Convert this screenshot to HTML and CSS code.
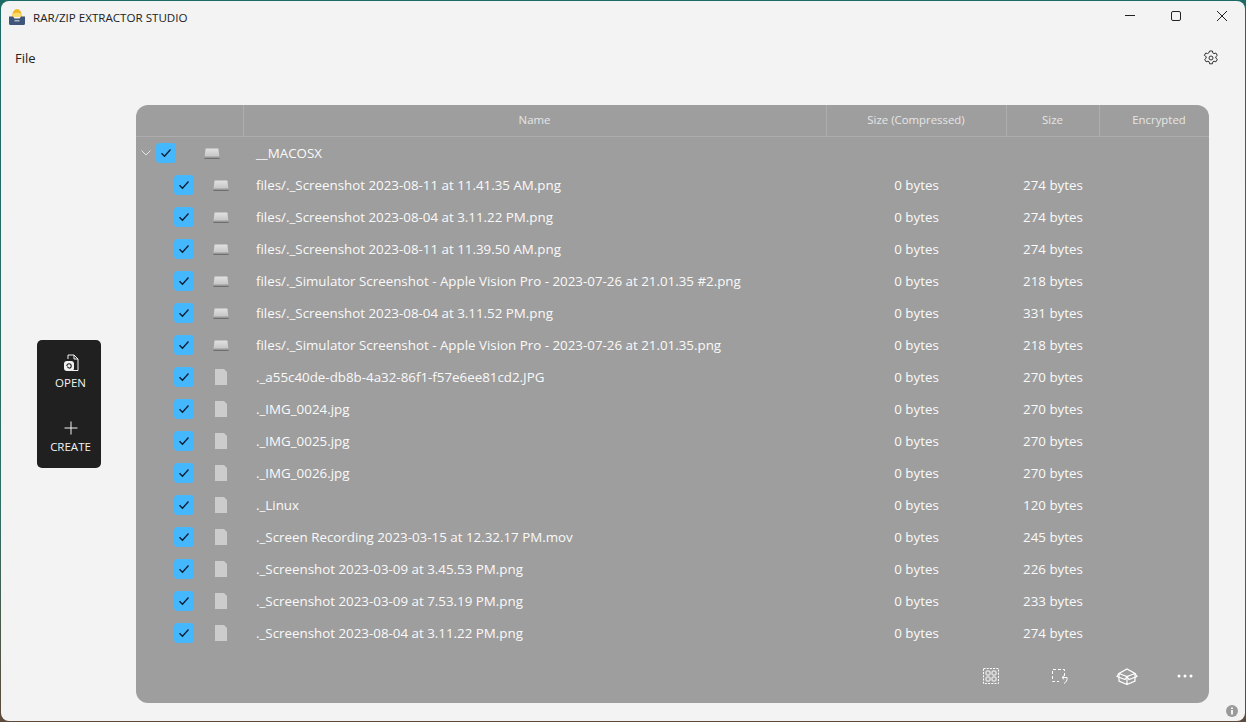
FILE: index.html
```html
<!DOCTYPE html>
<html lang="en">
<head>
<meta charset="utf-8">
<title>RAR/ZIP Extractor Studio</title>
<link rel="stylesheet" href="styles.css">
</head>
<body>
<svg class="defs" width="0" height="0" aria-hidden="true">
  <defs>
    <linearGradient id="driveFill" x1="0" y1="0" x2="0" y2="1">
      <stop offset="0" stop-color="#e2e2e2"/><stop offset="0.75" stop-color="#c8c8c8"/><stop offset="1" stop-color="#8a8a8a"/>
    </linearGradient>
    <symbol id="drive" viewBox="0 0 16 11"><path d="M1.600 0.500h12.800l1.200 9.500H0.400z" fill="url(#driveFill)"/><rect x="0.400" y="10" width="15.200" height="1" fill="#6f6f6f"/></symbol>
    <symbol id="file" viewBox="0 0 12 16"><path d="M0 0h9l3 3v13H0z" fill="#cccccc"/></symbol>
    <symbol id="check" viewBox="0 0 12 10"><path d="M1.500 5.200l3 3L10.500 1.500" fill="none" stroke="#0c1c30" stroke-width="1.300"/></symbol>
  </defs>
</svg>
<div class="window">
  <header class="titlebar">
    <div class="title">
      <svg class="logo" viewBox="0 0 16 16" width="16" height="16"><path d="M3 8C3 3 5.500 0 8 0s5 3 5 8z" fill="#f2b824"/><path d="M2 8l2-3.500c2.500-1 5.500-1 8 0L14 8z" fill="#fbdc6a"/><path d="M0 7.500h4l1.500 2h5l1.500-2h4v7a1.500 1.500 0 0 1-1.500 1.500h-13A1.500 1.500 0 0 1 0 14.500z" fill="#40557a"/><rect x="5.500" y="11" width="5" height="1.500" fill="#aab6c8"/></svg>
      <span>RAR/ZIP EXTRACTOR STUDIO</span>
    </div>
    <div class="controls">
      <svg class="ctl" viewBox="0 0 46 32" width="46" height="32"><path d="M18 14.500h10" stroke="#222" fill="none"/></svg>
      <svg class="ctl" viewBox="0 0 46 32" width="46" height="32"><rect x="18.500" y="10.500" width="9" height="9" rx="1.500" stroke="#222" fill="none"/></svg>
      <svg class="ctl" viewBox="0 0 46 32" width="46" height="32"><path d="M18 10l10 10M28 10l-10 10" stroke="#222" fill="none"/></svg>
    </div>
  </header>
  <div class="menubar">
    <span class="menu-file">File</span>
    <svg class="gear" viewBox="0 0 16 16" width="16" height="16"><path d="M6.600 1h2.800l.4 1.900 1.200.7 1.900-.6 1.400 2.400-1.500 1.300v1.400l1.500 1.300-1.400 2.400-1.900-.6-1.200.7-.4 1.900H6.600l-.4-1.900-1.200-.7-1.900.6-1.400-2.400 1.500-1.300V6.700L1.300 5.400l1.400-2.400 1.900.6 1.200-.7z" fill="none" stroke="#333" stroke-width="1"/><circle cx="8" cy="8" r="2" fill="none" stroke="#333"/></svg>
  </div>
  <div class="content">
    <aside class="side">
      <div class="actions">
        <div class="action">
          <svg viewBox="0 0 16 18" width="16" height="18"><path d="M5 5V1h6l4 4v11.500H9" fill="none" stroke="#f2f2f2"/><path d="M11 1v4h4" fill="none" stroke="#f2f2f2"/><rect x="1" y="7" width="10" height="10" rx="3" fill="#f2f2f2"/><path d="M3.800 12a2.200 2.200 0 1 1 2.200 2.200M6 14.200l-1.800-1.500" fill="none" stroke="#202020" stroke-width="1.100"/></svg>
          <span>OPEN</span>
        </div>
        <div class="action">
          <svg viewBox="0 0 16 16" width="16" height="16"><path d="M8 1.500v13M1.500 8h13" stroke="#f2f2f2" fill="none"/></svg>
          <span>CREATE</span>
        </div>
      </div>
    </aside>
    <main class="panel">
      <div class="row head">
        <div class="c first"></div><div class="c">Name</div><div class="c">Size (Compressed)</div><div class="c">Size</div><div class="c enc">Encrypted</div>
      </div>
      <div class="rows">
        <div class="row root"><div class="c first"><svg class="chev" viewBox="0 0 10 6" width="10" height="6"><path d="M.5.500L5 5l4.500-4.500" fill="none" stroke="#e4e4e4"/></svg><span class="cb"><svg width="12" height="10"><use href="#check"/></svg></span><svg class="ic-drive" width="16" height="11"><use href="#drive"/></svg></div><div class="c name">__MACOSX</div><div class="c"></div><div class="c"></div><div class="c"></div></div>
        <div class="row"><div class="c first"><span class="cb"><svg width="12" height="10"><use href="#check"/></svg></span><svg class="ic-drive" width="16" height="11"><use href="#drive"/></svg></div><div class="c name">files/._Screenshot 2023-08-11 at 11.41.35 AM.png</div><div class="c">0 bytes</div><div class="c">274 bytes</div><div class="c"></div></div>
        <div class="row"><div class="c first"><span class="cb"><svg width="12" height="10"><use href="#check"/></svg></span><svg class="ic-drive" width="16" height="11"><use href="#drive"/></svg></div><div class="c name">files/._Screenshot 2023-08-04 at 3.11.22 PM.png</div><div class="c">0 bytes</div><div class="c">274 bytes</div><div class="c"></div></div>
        <div class="row"><div class="c first"><span class="cb"><svg width="12" height="10"><use href="#check"/></svg></span><svg class="ic-drive" width="16" height="11"><use href="#drive"/></svg></div><div class="c name">files/._Screenshot 2023-08-11 at 11.39.50 AM.png</div><div class="c">0 bytes</div><div class="c">274 bytes</div><div class="c"></div></div>
        <div class="row"><div class="c first"><span class="cb"><svg width="12" height="10"><use href="#check"/></svg></span><svg class="ic-drive" width="16" height="11"><use href="#drive"/></svg></div><div class="c name">files/._Simulator Screenshot - Apple Vision Pro - 2023-07-26 at 21.01.35 #2.png</div><div class="c">0 bytes</div><div class="c">218 bytes</div><div class="c"></div></div>
        <div class="row"><div class="c first"><span class="cb"><svg width="12" height="10"><use href="#check"/></svg></span><svg class="ic-drive" width="16" height="11"><use href="#drive"/></svg></div><div class="c name">files/._Screenshot 2023-08-04 at 3.11.52 PM.png</div><div class="c">0 bytes</div><div class="c">331 bytes</div><div class="c"></div></div>
        <div class="row"><div class="c first"><span class="cb"><svg width="12" height="10"><use href="#check"/></svg></span><svg class="ic-drive" width="16" height="11"><use href="#drive"/></svg></div><div class="c name">files/._Simulator Screenshot - Apple Vision Pro - 2023-07-26 at 21.01.35.png</div><div class="c">0 bytes</div><div class="c">218 bytes</div><div class="c"></div></div>
        <div class="row"><div class="c first"><span class="cb"><svg width="12" height="10"><use href="#check"/></svg></span><svg class="ic-file" width="12" height="16"><use href="#file"/></svg></div><div class="c name">._a55c40de-db8b-4a32-86f1-f57e6ee81cd2.JPG</div><div class="c">0 bytes</div><div class="c">270 bytes</div><div class="c"></div></div>
        <div class="row"><div class="c first"><span class="cb"><svg width="12" height="10"><use href="#check"/></svg></span><svg class="ic-file" width="12" height="16"><use href="#file"/></svg></div><div class="c name">._IMG_0024.jpg</div><div class="c">0 bytes</div><div class="c">270 bytes</div><div class="c"></div></div>
        <div class="row"><div class="c first"><span class="cb"><svg width="12" height="10"><use href="#check"/></svg></span><svg class="ic-file" width="12" height="16"><use href="#file"/></svg></div><div class="c name">._IMG_0025.jpg</div><div class="c">0 bytes</div><div class="c">270 bytes</div><div class="c"></div></div>
        <div class="row"><div class="c first"><span class="cb"><svg width="12" height="10"><use href="#check"/></svg></span><svg class="ic-file" width="12" height="16"><use href="#file"/></svg></div><div class="c name">._IMG_0026.jpg</div><div class="c">0 bytes</div><div class="c">270 bytes</div><div class="c"></div></div>
        <div class="row"><div class="c first"><span class="cb"><svg width="12" height="10"><use href="#check"/></svg></span><svg class="ic-file" width="12" height="16"><use href="#file"/></svg></div><div class="c name">._Linux</div><div class="c">0 bytes</div><div class="c">120 bytes</div><div class="c"></div></div>
        <div class="row"><div class="c first"><span class="cb"><svg width="12" height="10"><use href="#check"/></svg></span><svg class="ic-file" width="12" height="16"><use href="#file"/></svg></div><div class="c name">._Screen Recording 2023-03-15 at 12.32.17 PM.mov</div><div class="c">0 bytes</div><div class="c">245 bytes</div><div class="c"></div></div>
        <div class="row"><div class="c first"><span class="cb"><svg width="12" height="10"><use href="#check"/></svg></span><svg class="ic-file" width="12" height="16"><use href="#file"/></svg></div><div class="c name">._Screenshot 2023-03-09 at 3.45.53 PM.png</div><div class="c">0 bytes</div><div class="c">226 bytes</div><div class="c"></div></div>
        <div class="row"><div class="c first"><span class="cb"><svg width="12" height="10"><use href="#check"/></svg></span><svg class="ic-file" width="12" height="16"><use href="#file"/></svg></div><div class="c name">._Screenshot 2023-03-09 at 7.53.19 PM.png</div><div class="c">0 bytes</div><div class="c">233 bytes</div><div class="c"></div></div>
        <div class="row"><div class="c first"><span class="cb"><svg width="12" height="10"><use href="#check"/></svg></span><svg class="ic-file" width="12" height="16"><use href="#file"/></svg></div><div class="c name">._Screenshot 2023-08-04 at 3.11.22 PM.png</div><div class="c">0 bytes</div><div class="c">274 bytes</div><div class="c"></div></div>
      </div>
      <div class="tools">
        <svg viewBox="0 0 16 16" width="16" height="16"><g fill="none" stroke="#fff"><rect x=".5" y=".5" width="15" height="15" stroke-dasharray="2 1.200"/><rect x="3" y="3" width="4" height="4" rx=".8"/><rect x="9" y="3" width="4" height="4" rx=".8"/><rect x="3" y="9" width="4" height="4" rx=".8"/><rect x="9" y="9" width="4" height="4" rx=".8"/></g></svg>
        <svg viewBox="0 0 16 16" width="16" height="16"><g fill="none" stroke="#fff"><path d="M12.500 8V1.500h-12v12H7" stroke-dasharray="3 2"/><path d="M10 9.500h5c.6 2.800-1 4.800-3 6M10 9.500l2.200-2M10 9.500l2.200 2"/></g></svg>
        <svg viewBox="0 0 22 17" width="22" height="17"><g fill="none" stroke="#fff" stroke-width="1.200"><path d="M3 5.500L11 8.500l8-3-8-4.500zM3 5.500v7.500l8 3.500 8-3.500V5.500M11 8.500v8"/><path d="M3 5.500L1 8.500l8 3 2-3 2 3 8-3-2-3"/></g></svg>
        <svg viewBox="0 0 16 4" width="16" height="4"><g fill="#fff"><circle cx="2" cy="2" r="1.500"/><circle cx="8" cy="2" r="1.500"/><circle cx="14" cy="2" r="1.500"/></g></svg>
      </div>
    </main>
  </div>
  <svg class="info" viewBox="0 0 12 12" width="12" height="12"><circle cx="6" cy="6" r="6" fill="#9a9a9a"/><rect x="5" y="5" width="2" height="4.500" fill="#f3f3f3"/><rect x="5" y="2.500" width="2" height="1.500" fill="#f3f3f3"/></svg>
</div>
</body>
</html>
```

FILE: styles.css
```css
html, body {
  margin: 0;
  height: 100%;
}
body {
  box-sizing: border-box;
  padding: 1px;
  background: linear-gradient(#1c6a66 0, #2f6e64 70%, #5d4a3a 100%);
  overflow: hidden;
  font-family: "Open Sans", "Noto Sans", sans-serif;
}
.defs {
  position: absolute;
}
.window {
  position: relative;
  box-sizing: border-box;
  width: 1244px;
  height: 720px;
  background: #f3f3f3;
  border-radius: 8px;
  display: flex;
  flex-direction: column;
}
.titlebar {
  height: 32px;
  display: flex;
  justify-content: space-between;
  align-items: flex-start;
}
.title {
  display: flex;
  align-items: center;
  gap: 8px;
  height: 32px;
  padding-left: 8px;
  font-size: 11.6px;
  color: #222;
}
.controls {
  display: flex;
  flex-direction: row;
}
.ctl {
  display: block;
}
.menubar {
  height: 40px;
  display: flex;
  justify-content: space-between;
  align-items: center;
  padding: 10px 26px 0 14px;
  box-sizing: border-box;
}
.menu-file {
  font-size: 13px;
  color: #222;
}
.content {
  display: flex;
  height: 598px;
  padding-top: 32px;
}
.side {
  width: 135px;
  flex: none;
  box-sizing: border-box;
  padding-left: 36px;
  padding-top: 235px;
}
.actions {
  width: 64px;
  height: 128px;
  background: #202020;
  border-radius: 5px;
  display: flex;
  flex-direction: column;
}
.action {
  height: 64px;
  box-sizing: border-box;
  padding-left: 3px;
  display: flex;
  flex-direction: column;
  align-items: center;
  justify-content: center;
  gap: 3px;
  color: #f2f2f2;
  font-size: 11.5px;
  line-height: 15px;
}
.action + .action {
  padding-top: 2px;
}
.panel {
  width: 1073px;
  height: 598px;
  background: #9e9e9e;
  border-radius: 12px;
  display: flex;
  flex-direction: column;
  color: #fafafa;
  overflow: hidden;
}
.row {
  display: grid;
  grid-template-columns: 108px 583px 180px 93px 109px;
  height: 32px;
  align-items: center;
  font-size: 13.35px;
}
.c {
  text-align: center;
  white-space: nowrap;
  padding-right: 1px;
  box-sizing: border-box;
}
.first {
  display: flex;
  align-items: center;
  height: 32px;
  padding-left: 38px;
  box-sizing: border-box;
}
.head {
  font-size: 11.4px;
  color: #e6e6e6;
  border-bottom: 1px solid #adadad;
  box-sizing: border-box;
}
.head .c {
  height: 31px;
  line-height: 30px;
  border-right: 1px solid #adadad;
  box-sizing: border-box;
}
.head .first {
  padding: 0;
}
.head .enc {
  border-right: 0;
  padding-left: 10px;
}
.name {
  text-align: left;
  padding-left: 12px;
}
.root .first {
  padding-left: 5px;
}
.chev {
  margin-right: 5px;
}
.cb {
  width: 20px;
  height: 20px;
  flex: none;
  background: #45b7fd;
  border-radius: 4px;
  display: flex;
  align-items: center;
  justify-content: center;
}
.ic-drive {
  margin-left: 19px;
  flex: none;
}
.root .ic-drive {
  margin-left: 28px;
}
.ic-file {
  margin-left: 21px;
  flex: none;
}
.rows {
  height: 512px;
}
.tools {
  display: grid;
  grid-template-columns: 72px 66px 68px 48px;
  justify-content: end;
  justify-items: center;
  align-items: center;
  height: 54px;
}
.info {
  position: absolute;
  right: 7px;
  bottom: 4px;
}
```
